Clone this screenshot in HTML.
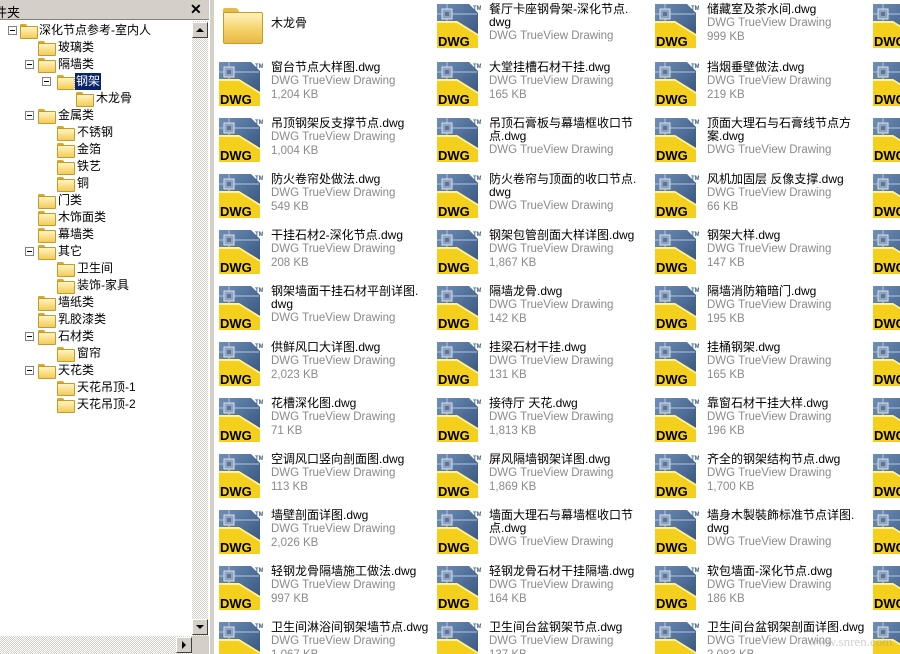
<!DOCTYPE html>
<html style="width:900px;height:654px;overflow:hidden"><head><meta charset="utf-8">
<style>
*{margin:0;padding:0;box-sizing:border-box}
html,body{overflow:hidden}
body{width:900px;height:654px;overflow:hidden;background:#fff;font-family:"Liberation Sans","Noto Sans CJK SC","WenQuanYi Zen Hei",sans-serif;font-size:12px;position:relative}
#left{position:absolute;left:0;top:0;width:209px;height:654px;background:#fff}
#hdr{position:absolute;left:0;top:0;width:209px;height:20px;background:#d4d0c8;border-bottom:1px solid #808080}
#hdr .t{position:absolute;left:-6px;top:2px;font-size:13px}
#hdr .x{position:absolute;left:190px;top:1px;font-size:14px;font-weight:bold}
#vs{position:absolute;left:192px;top:21px;width:16px;height:615px;background:repeating-conic-gradient(#d4d0c8 0 25%,#fff 0 50%) 0 0/2px 2px}
.btn{position:absolute;width:16px;height:16px;background:#d4d0c8;border-top:1px solid #fff;border-left:1px solid #fff;border-right:1px solid #404040;border-bottom:1px solid #404040}
.btn i{position:absolute;width:0;height:0}
#hs{position:absolute;left:0;top:636px;width:192px;height:18px;background:repeating-conic-gradient(#d4d0c8 0 25%,#fff 0 50%) 0 0/2px 2px}
#corner{position:absolute;left:192px;top:636px;width:17px;height:18px;background:#d4d0c8}
#split{position:absolute;left:209px;top:0;width:5px;height:654px;background:#d4d0c8;border-left:1px solid #fff}
.tr{position:absolute;height:17px;line-height:17px;white-space:nowrap}
.tr .f{position:absolute;top:2px;left:0}
.tr span{position:absolute;left:19px;top:0;padding:0 1px}
.pm{position:absolute;width:9px;height:9px;border:1px solid #808080;background:#fff;top:4px}
.pm:after{content:"";position:absolute;left:1px;top:3px;width:5px;height:1px;background:#000}
.sel{background:#0a246a;color:#fff;outline:1px dotted #fff}
.fold{width:16px;height:13px;position:relative}
.fold:before{content:"";position:absolute;left:0;top:0;width:7px;height:3px;background:#d8a930;border-radius:1px 2px 0 0}
.fold:after{content:"";position:absolute;left:0;top:2px;width:16px;height:11px;background:linear-gradient(#fff4c0,#f2cc5a);border:1px solid #c99a25;border-radius:1px}
.tile{position:absolute;width:218px;height:56px;overflow:hidden}
.tile svg{position:absolute;left:0;top:2px}
.tile .tx{position:absolute;left:52px;top:1px;line-height:13px;font-size:12px;white-space:nowrap}
.g{color:#8a8a8a;font-size:11.5px}
</style></head><body>
<svg width="0" height="0" style="position:absolute">
<defs>
<linearGradient id="bl" x1="0" y1="0" x2="1" y2="1"><stop offset="0" stop-color="#6f8fb8"/><stop offset="1" stop-color="#2f4f7a"/></linearGradient>
<g id="i">
<polygon points="0,0 32,0 41,9 41,44 0,44" fill="url(#bl)"/>
<line x1="0" y1="10" x2="40" y2="10" stroke="#b4c6dc" stroke-width="1"/>
<line x1="10" y1="0" x2="10" y2="20" stroke="#b4c6dc" stroke-width="1"/>
<rect x="5" y="5" width="10" height="10" fill="#8ea3bd" stroke="#d8e2ee"/>
<rect x="8" y="8" width="4" height="4" fill="#5c7597"/>
<polygon points="0,17 20,17 41,30 41,44 0,44" fill="#f4d01c"/>
<polygon points="0,17 20,17 41,30 41,32 20,19 0,19" fill="#fff2a0"/>
<text x="1" y="42" font-family="Liberation Sans" font-weight="bold" font-size="13" fill="#000">DWG</text>
<text x="36" y="6" font-family="Liberation Sans" font-weight="bold" font-size="6" fill="#3d5f8a">TM</text>
</g>
</defs></svg>

<div id="left">
<div id="hdr"><span class="t">件夹</span><span class="x">✕</span></div>
<div class="tr" style="left:8px;top:22px"><div class="pm" style="left:0"></div><div class="f fold" style="left:12px"></div><span style="left:30px">深化节点参考-室内人</span></div>
<div class="tr" style="left:38px;top:39px"><div class="f fold"></div><span>玻璃类</span></div>
<div class="tr" style="left:25px;top:56px"><div class="pm" style="left:0"></div><div class="f fold" style="left:13px"></div><span style="left:32px">隔墙类</span></div>
<div class="tr" style="left:42px;top:73px"><div class="pm" style="left:0"></div><div class="f fold" style="left:15px"></div><span class="sel" style="left:33px">钢架</span></div>
<div class="tr" style="left:76px;top:90px"><div class="f fold"></div><span>木龙骨</span></div>
<div class="tr" style="left:25px;top:107px"><div class="pm" style="left:0"></div><div class="f fold" style="left:13px"></div><span style="left:32px">金属类</span></div>
<div class="tr" style="left:57px;top:124px"><div class="f fold"></div><span>不锈钢</span></div>
<div class="tr" style="left:57px;top:141px"><div class="f fold"></div><span>金箔</span></div>
<div class="tr" style="left:57px;top:158px"><div class="f fold"></div><span>铁艺</span></div>
<div class="tr" style="left:57px;top:175px"><div class="f fold"></div><span>铜</span></div>
<div class="tr" style="left:38px;top:192px"><div class="f fold"></div><span>门类</span></div>
<div class="tr" style="left:38px;top:209px"><div class="f fold"></div><span>木饰面类</span></div>
<div class="tr" style="left:38px;top:226px"><div class="f fold"></div><span>幕墙类</span></div>
<div class="tr" style="left:25px;top:243px"><div class="pm" style="left:0"></div><div class="f fold" style="left:13px"></div><span style="left:32px">其它</span></div>
<div class="tr" style="left:57px;top:260px"><div class="f fold"></div><span>卫生间</span></div>
<div class="tr" style="left:57px;top:277px"><div class="f fold"></div><span>装饰-家具</span></div>
<div class="tr" style="left:38px;top:294px"><div class="f fold"></div><span>墙纸类</span></div>
<div class="tr" style="left:38px;top:311px"><div class="f fold"></div><span>乳胶漆类</span></div>
<div class="tr" style="left:25px;top:328px"><div class="pm" style="left:0"></div><div class="f fold" style="left:13px"></div><span style="left:32px">石材类</span></div>
<div class="tr" style="left:57px;top:345px"><div class="f fold"></div><span>窗帘</span></div>
<div class="tr" style="left:25px;top:362px"><div class="pm" style="left:0"></div><div class="f fold" style="left:13px"></div><span style="left:32px">天花类</span></div>
<div class="tr" style="left:57px;top:379px"><div class="f fold"></div><span>天花吊顶-1</span></div>
<div class="tr" style="left:57px;top:396px"><div class="f fold"></div><span>天花吊顶-2</span></div>

<div id="vs"></div>
<div class="btn" style="left:192px;top:22px"><i style="left:3px;top:5px;border-left:4px solid transparent;border-right:4px solid transparent;border-bottom:4px solid #000"></i></div>
<div class="btn" style="left:192px;top:619px"><i style="left:3px;top:5px;border-left:4px solid transparent;border-right:4px solid transparent;border-top:4px solid #000"></i></div>
<div id="hs"></div>
<div class="btn" style="left:176px;top:637px"><i style="left:5px;top:3px;border-top:4px solid transparent;border-bottom:4px solid transparent;border-left:4px solid #000"></i></div>
<div id="corner"></div>
</div>
<div id="split"></div>

<div style="position:absolute;left:223px;top:8px;width:40px;height:36px">
<div style="position:absolute;left:0;top:0;width:16px;height:6px;background:#e6b94a;border-radius:2px 4px 0 0"></div>
<div style="position:absolute;left:0;top:4px;width:40px;height:32px;background:linear-gradient(#fff3bd,#f3cf63 60%,#e8b947);border:1px solid #c99a25;border-radius:2px"></div>
</div>
<div class="tile" style="left:271px;top:14px">木龙骨</div>

<div class="tile" style="left:437px;top:2px"><svg width="44" height="46"><use href="#i"/></svg><div class="tx">餐厅卡座钢骨架-深化节点.<br>dwg<br><span class="g">DWG TrueView Drawing</span></div></div>
<div class="tile" style="left:655px;top:2px"><svg width="44" height="46"><use href="#i"/></svg><div class="tx">储藏室及茶水间.dwg<br><span class="g">DWG TrueView Drawing</span><br><span class="g">999 KB</span></div></div>
<div class="tile" style="left:873px;top:2px"><svg width="44" height="46"><use href="#i"/></svg></div>

<div class="tile" style="left:219px;top:60px"><svg width="44" height="46"><use href="#i"/></svg><div class="tx">窗台节点大样图.dwg<br><span class="g">DWG TrueView Drawing</span><br><span class="g">1,204 KB</span></div></div>
<div class="tile" style="left:437px;top:60px"><svg width="44" height="46"><use href="#i"/></svg><div class="tx">大堂挂槽石材干挂.dwg<br><span class="g">DWG TrueView Drawing</span><br><span class="g">165 KB</span></div></div>
<div class="tile" style="left:655px;top:60px"><svg width="44" height="46"><use href="#i"/></svg><div class="tx">挡烟垂壁做法.dwg<br><span class="g">DWG TrueView Drawing</span><br><span class="g">219 KB</span></div></div>
<div class="tile" style="left:873px;top:60px"><svg width="44" height="46"><use href="#i"/></svg></div>

<div class="tile" style="left:219px;top:116px"><svg width="44" height="46"><use href="#i"/></svg><div class="tx">吊顶钢架反支撑节点.dwg<br><span class="g">DWG TrueView Drawing</span><br><span class="g">1,004 KB</span></div></div>
<div class="tile" style="left:437px;top:116px"><svg width="44" height="46"><use href="#i"/></svg><div class="tx">吊顶石膏板与幕墙框收口节<br>点.dwg<br><span class="g">DWG TrueView Drawing</span></div></div>
<div class="tile" style="left:655px;top:116px"><svg width="44" height="46"><use href="#i"/></svg><div class="tx">顶面大理石与石膏线节点方<br>案.dwg<br><span class="g">DWG TrueView Drawing</span></div></div>
<div class="tile" style="left:873px;top:116px"><svg width="44" height="46"><use href="#i"/></svg></div>

<div class="tile" style="left:219px;top:172px"><svg width="44" height="46"><use href="#i"/></svg><div class="tx">防火卷帘处做法.dwg<br><span class="g">DWG TrueView Drawing</span><br><span class="g">549 KB</span></div></div>
<div class="tile" style="left:437px;top:172px"><svg width="44" height="46"><use href="#i"/></svg><div class="tx">防火卷帘与顶面的收口节点.<br>dwg<br><span class="g">DWG TrueView Drawing</span></div></div>
<div class="tile" style="left:655px;top:172px"><svg width="44" height="46"><use href="#i"/></svg><div class="tx">风机加固层 反像支撑.dwg<br><span class="g">DWG TrueView Drawing</span><br><span class="g">66 KB</span></div></div>
<div class="tile" style="left:873px;top:172px"><svg width="44" height="46"><use href="#i"/></svg></div>

<div class="tile" style="left:219px;top:228px"><svg width="44" height="46"><use href="#i"/></svg><div class="tx">干挂石材2-深化节点.dwg<br><span class="g">DWG TrueView Drawing</span><br><span class="g">208 KB</span></div></div>
<div class="tile" style="left:437px;top:228px"><svg width="44" height="46"><use href="#i"/></svg><div class="tx">钢架包管剖面大样详图.dwg<br><span class="g">DWG TrueView Drawing</span><br><span class="g">1,867 KB</span></div></div>
<div class="tile" style="left:655px;top:228px"><svg width="44" height="46"><use href="#i"/></svg><div class="tx">钢架大样.dwg<br><span class="g">DWG TrueView Drawing</span><br><span class="g">147 KB</span></div></div>
<div class="tile" style="left:873px;top:228px"><svg width="44" height="46"><use href="#i"/></svg></div>

<div class="tile" style="left:219px;top:284px"><svg width="44" height="46"><use href="#i"/></svg><div class="tx">钢架墙面干挂石材平剖详图.<br>dwg<br><span class="g">DWG TrueView Drawing</span></div></div>
<div class="tile" style="left:437px;top:284px"><svg width="44" height="46"><use href="#i"/></svg><div class="tx">隔墙龙骨.dwg<br><span class="g">DWG TrueView Drawing</span><br><span class="g">142 KB</span></div></div>
<div class="tile" style="left:655px;top:284px"><svg width="44" height="46"><use href="#i"/></svg><div class="tx">隔墙消防箱暗门.dwg<br><span class="g">DWG TrueView Drawing</span><br><span class="g">195 KB</span></div></div>
<div class="tile" style="left:873px;top:284px"><svg width="44" height="46"><use href="#i"/></svg></div>

<div class="tile" style="left:219px;top:340px"><svg width="44" height="46"><use href="#i"/></svg><div class="tx">供鲜风口大详图.dwg<br><span class="g">DWG TrueView Drawing</span><br><span class="g">2,023 KB</span></div></div>
<div class="tile" style="left:437px;top:340px"><svg width="44" height="46"><use href="#i"/></svg><div class="tx">挂梁石材干挂.dwg<br><span class="g">DWG TrueView Drawing</span><br><span class="g">131 KB</span></div></div>
<div class="tile" style="left:655px;top:340px"><svg width="44" height="46"><use href="#i"/></svg><div class="tx">挂桶钢架.dwg<br><span class="g">DWG TrueView Drawing</span><br><span class="g">165 KB</span></div></div>
<div class="tile" style="left:873px;top:340px"><svg width="44" height="46"><use href="#i"/></svg></div>

<div class="tile" style="left:219px;top:396px"><svg width="44" height="46"><use href="#i"/></svg><div class="tx">花槽深化图.dwg<br><span class="g">DWG TrueView Drawing</span><br><span class="g">71 KB</span></div></div>
<div class="tile" style="left:437px;top:396px"><svg width="44" height="46"><use href="#i"/></svg><div class="tx">接待厅 天花.dwg<br><span class="g">DWG TrueView Drawing</span><br><span class="g">1,813 KB</span></div></div>
<div class="tile" style="left:655px;top:396px"><svg width="44" height="46"><use href="#i"/></svg><div class="tx">靠窗石材干挂大样.dwg<br><span class="g">DWG TrueView Drawing</span><br><span class="g">196 KB</span></div></div>
<div class="tile" style="left:873px;top:396px"><svg width="44" height="46"><use href="#i"/></svg></div>

<div class="tile" style="left:219px;top:452px"><svg width="44" height="46"><use href="#i"/></svg><div class="tx">空调风口竖向剖面图.dwg<br><span class="g">DWG TrueView Drawing</span><br><span class="g">113 KB</span></div></div>
<div class="tile" style="left:437px;top:452px"><svg width="44" height="46"><use href="#i"/></svg><div class="tx">屏风隔墙钢架详图.dwg<br><span class="g">DWG TrueView Drawing</span><br><span class="g">1,869 KB</span></div></div>
<div class="tile" style="left:655px;top:452px"><svg width="44" height="46"><use href="#i"/></svg><div class="tx">齐全的钢架结构节点.dwg<br><span class="g">DWG TrueView Drawing</span><br><span class="g">1,700 KB</span></div></div>
<div class="tile" style="left:873px;top:452px"><svg width="44" height="46"><use href="#i"/></svg></div>

<div class="tile" style="left:219px;top:508px"><svg width="44" height="46"><use href="#i"/></svg><div class="tx">墙壁剖面详图.dwg<br><span class="g">DWG TrueView Drawing</span><br><span class="g">2,026 KB</span></div></div>
<div class="tile" style="left:437px;top:508px"><svg width="44" height="46"><use href="#i"/></svg><div class="tx">墙面大理石与幕墙框收口节<br>点.dwg<br><span class="g">DWG TrueView Drawing</span></div></div>
<div class="tile" style="left:655px;top:508px"><svg width="44" height="46"><use href="#i"/></svg><div class="tx">墙身木製裝飾标准节点详图.<br>dwg<br><span class="g">DWG TrueView Drawing</span></div></div>
<div class="tile" style="left:873px;top:508px"><svg width="44" height="46"><use href="#i"/></svg></div>

<div class="tile" style="left:219px;top:564px"><svg width="44" height="46"><use href="#i"/></svg><div class="tx">轻钢龙骨隔墙施工做法.dwg<br><span class="g">DWG TrueView Drawing</span><br><span class="g">997 KB</span></div></div>
<div class="tile" style="left:437px;top:564px"><svg width="44" height="46"><use href="#i"/></svg><div class="tx">轻钢龙骨石材干挂隔墙.dwg<br><span class="g">DWG TrueView Drawing</span><br><span class="g">164 KB</span></div></div>
<div class="tile" style="left:655px;top:564px"><svg width="44" height="46"><use href="#i"/></svg><div class="tx">软包墙面-深化节点.dwg<br><span class="g">DWG TrueView Drawing</span><br><span class="g">186 KB</span></div></div>
<div class="tile" style="left:873px;top:564px"><svg width="44" height="46"><use href="#i"/></svg></div>

<div class="tile" style="left:219px;top:620px;height:34px"><svg width="44" height="46"><use href="#i"/></svg><div class="tx">卫生间淋浴间钢架墙节点.dwg<br><span class="g">DWG TrueView Drawing</span><br><span class="g">1,067 KB</span></div></div>
<div class="tile" style="left:437px;top:620px;height:34px"><svg width="44" height="46"><use href="#i"/></svg><div class="tx">卫生间台盆钢架节点.dwg<br><span class="g">DWG TrueView Drawing</span><br><span class="g">137 KB</span></div></div>
<div class="tile" style="left:655px;top:620px;height:34px"><svg width="44" height="46"><use href="#i"/></svg><div class="tx">卫生间台盆钢架剖面详图.dwg<br><span class="g">DWG TrueView Drawing</span><br><span class="g">2,083 KB</span></div></div>
<div class="tile" style="left:873px;top:620px;height:34px;width:27px"><svg width="44" height="46"><use href="#i"/></svg></div>

<div style="position:absolute;left:808px;top:634px;font-size:13px;color:rgba(150,150,150,0.45);font-family:'Liberation Serif',serif">www.snren.com</div>
</body></html>
